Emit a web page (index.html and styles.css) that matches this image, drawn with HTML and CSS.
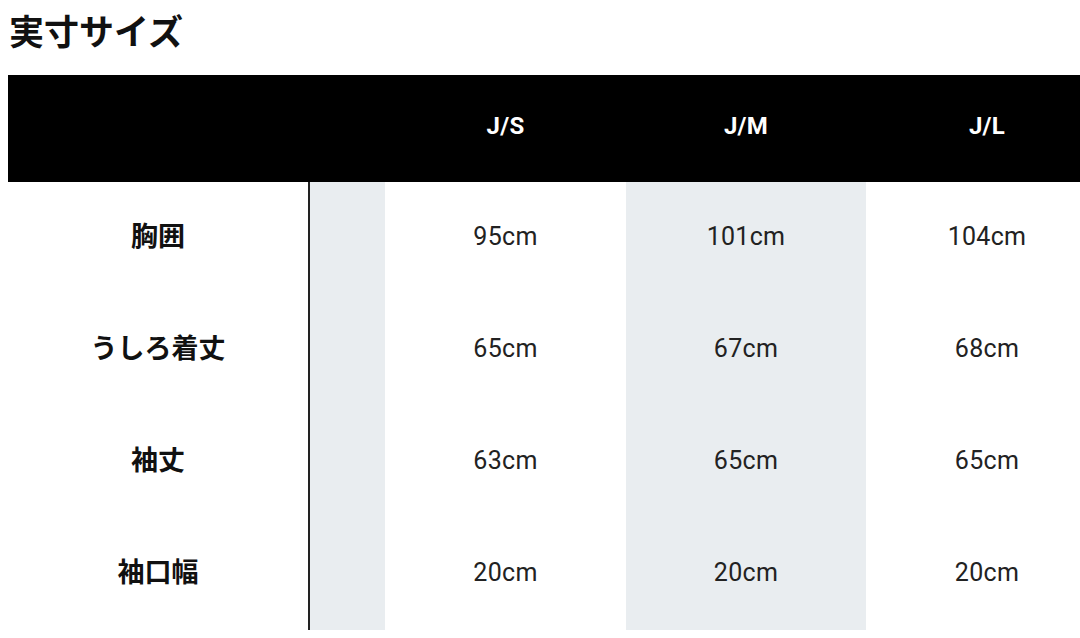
FILE: index.html
```html
<!DOCTYPE html>
<html lang="ja">
<head>
<meta charset="utf-8">
<title>実寸サイズ</title>
<link rel="stylesheet" href="styles.css">
</head>
<body>
<h1 class="title">実寸サイズ</h1>
<div class="table-wrap">
  <div class="size-table">
    <div class="row head">
      <div class="cell label"></div>
      <div class="cell spacer"></div>
      <div class="cell">J/S</div>
      <div class="cell">J/M</div>
      <div class="cell">J/L</div>
    </div>
    <div class="row">
      <div class="cell label">胸囲</div>
      <div class="cell spacer"></div>
      <div class="cell">95cm</div>
      <div class="cell alt">101cm</div>
      <div class="cell">104cm</div>
    </div>
    <div class="row">
      <div class="cell label">うしろ着丈</div>
      <div class="cell spacer"></div>
      <div class="cell">65cm</div>
      <div class="cell alt">67cm</div>
      <div class="cell">68cm</div>
    </div>
    <div class="row">
      <div class="cell label">袖丈</div>
      <div class="cell spacer"></div>
      <div class="cell">63cm</div>
      <div class="cell alt">65cm</div>
      <div class="cell">65cm</div>
    </div>
    <div class="row">
      <div class="cell label">袖口幅</div>
      <div class="cell spacer"></div>
      <div class="cell">20cm</div>
      <div class="cell alt">20cm</div>
      <div class="cell">20cm</div>
    </div>
  </div>
</div>
</body>
</html>
```
FILE: styles.css
```css
html, body {
  margin: 0;
  padding: 0;
  background: #ffffff;
  overflow: hidden;
}
body {
  padding: 8px 0 0 8px;
  font-family: Roboto, "Noto Sans CJK JP", sans-serif;
  color: #222;
}
.title {
  margin: 0 0 23px 1px;
  font-family: "Noto Sans CJK JP", sans-serif;
  font-weight: 700;
  font-size: 35px;
  line-height: 44px;
  color: #111;
}
.table-wrap {
  width: 1072px;
  overflow: hidden;
}
.size-table {
  width: 1100px;
}
.row {
  display: grid;
  grid-template-columns: 302px 75px 241px 240px 242px;
  height: 112px;
}
.cell {
  display: flex;
  align-items: center;
  justify-content: center;
  font-size: 25px;
  letter-spacing: 0.3px;
  padding-bottom: 3px;
}
.head {
  height: 107px;
  background: #000;
}
.head .cell {
  color: #fff;
  font-weight: 700;
  font-size: 24px;
  padding-bottom: 5px;
}
.head .label,
.head .spacer {
  background: #000;
  border: none;
}
.label {
  font-family: "Noto Sans CJK JP", sans-serif;
  font-weight: 700;
  font-size: 27px;
  color: #111;
  letter-spacing: 0;
  border-right: 2px solid #222;
  padding-bottom: 8px;
}
.spacer,
.alt {
  background: #e9edf0;
}
```
